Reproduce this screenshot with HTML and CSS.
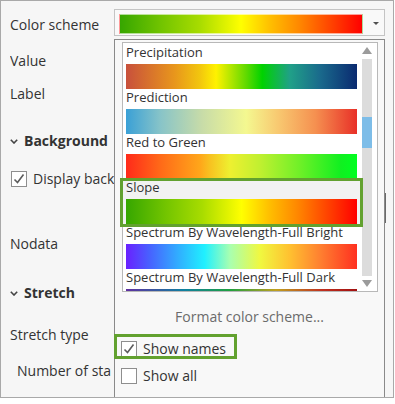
FILE: index.html
```html
<!DOCTYPE html>
<html lang="en">
<head>
<meta charset="utf-8">
<title>Color scheme</title>
<link rel="stylesheet" href="styles.css">
</head>
<body>
<div class="frame">
  <div class="panel">
    <div class="row row-scheme">
      <span class="label">Color scheme</span>
      <div class="combo">
        <div class="combo-ramp ramp-slope"></div>
        <span class="combo-arrow"></span>
        <div class="popup">
          <div class="list">
            <div class="items">
              <div class="item">
                <div class="item-name">Precipitation</div>
                <div class="item-ramp ramp-precip"></div>
              </div>
              <div class="item">
                <div class="item-name">Prediction</div>
                <div class="item-ramp ramp-predict"></div>
              </div>
              <div class="item">
                <div class="item-name">Red to Green</div>
                <div class="item-ramp ramp-redgreen"></div>
              </div>
              <div class="item item-selected">
                <div class="item-name">Slope</div>
                <div class="item-ramp ramp-slope"></div>
              </div>
              <div class="item">
                <div class="item-name">Spectrum By Wavelength-Full Bright</div>
                <div class="item-ramp ramp-bright"></div>
              </div>
              <div class="item">
                <div class="item-name">Spectrum By Wavelength-Full Dark</div>
                <div class="item-ramp ramp-dark"></div>
              </div>
            </div>
            <div class="scrollbar">
              <span class="sb-up"></span>
              <div class="sb-track"><div class="sb-thumb"></div></div>
              <span class="sb-down"></span>
            </div>
          </div>
          <div class="format">Format color scheme...</div>
          <div class="check-row first">
            <span class="checkbox"><svg width="14" height="14" viewBox="0 0 14 14"><path d="M2.5 7.5 L5.5 10.5 L11.5 2.5" fill="none" stroke="#5c5c5c" stroke-width="1.6"/></svg></span>
            <span>Show names</span>
          </div>
          <div class="check-row second">
            <span class="checkbox"></span>
            <span>Show all</span>
          </div>
        </div>
      </div>
    </div>
    <div class="row clip row-value">Value</div>
    <div class="row clip row-label">Label</div>
    <div class="row clip row-bg section"><svg class="chev" width="8" height="5" viewBox="0 0 8 5"><path d="M0.8 0.8 L4 4 L7.2 0.8" fill="none" stroke="#444" stroke-width="1.6"/></svg><span>Background</span></div>
    <div class="row clip row-display">
      <span class="checkbox"><svg width="14" height="14" viewBox="0 0 14 14"><path d="M2.5 7.5 L5.5 10.5 L11.5 2.5" fill="none" stroke="#5c5c5c" stroke-width="1.6"/></svg></span>
      <span>Display back</span>
    </div>
    <div class="row clip row-nodata">Nodata</div>
    <div class="row clip row-stretch section"><svg class="chev" width="8" height="5" viewBox="0 0 8 5"><path d="M0.8 0.8 L4 4 L7.2 0.8" fill="none" stroke="#444" stroke-width="1.6"/></svg><span>Stretch</span></div>
    <div class="row clip row-type">Stretch type</div>
    <div class="row clip row-num">Number of sta</div>
  </div>
  <div class="highlight hl-slope"></div>
  <div class="highlight hl-names"></div>
  <div class="mark"></div>
</div>
</body>
</html>
```

FILE: styles.css
```css
html, body {
  margin: 0;
  padding: 0;
  background: #ffffff;
}

.frame {
  position: relative;
  width: 394px;
  height: 398px;
  box-sizing: border-box;
  border: 1px solid #a9a9a9;
  background: #f6f6f6;
  overflow: hidden;
  font-family: "Open Sans", "Liberation Sans", sans-serif;
  font-size: 14px;
  line-height: 20px;
  color: #333333;
}

.panel {
  display: flex;
  flex-direction: column;
  padding: 8px 0 0 9px;
}

.row {
  display: flex;
  align-items: center;
  height: 20px;
  white-space: nowrap;
}

.clip {
  width: 104px;
  box-sizing: border-box;
  overflow: hidden;
}

.row-scheme {
  align-items: flex-start;
  height: 27px;
}

.row-scheme .label {
  flex: 0 0 104px;
  padding-top: 6px;
}

.row-value { margin-top: 15px; }
.row-label { margin-top: 13px; }
.row-bg { margin-top: 27px; }
.row-display { margin-top: 18px; }
.row-nodata { margin-top: 45px; }
.row-stretch { margin-top: 29px; }
.row-type { margin-top: 22px; }
.row-num { margin-top: 16px; padding-left: 7px; }

.section {
  font-weight: 700;
}

.chev {
  margin-right: 6px;
  flex: 0 0 auto;
}

.row-display .checkbox {
  margin-left: 1px;
  margin-right: 6px;
}

.checkbox {
  width: 16px;
  height: 16px;
  box-sizing: border-box;
  border: 1px solid #8e8e8e;
  background: #ffffff;
  display: inline-flex;
  align-items: center;
  justify-content: center;
  flex: 0 0 auto;
}

/* combo */
.combo {
  position: relative;
  z-index: 2;
  width: 271px;
  height: 27px;
  box-sizing: border-box;
  border: 1px solid #c4c4c4;
  background: #f9f9f9;
  display: flex;
  align-items: flex-start;
  padding: 4px 0 0 4px;
}

.combo-ramp {
  width: 244px;
  height: 20px;
  box-sizing: border-box;
  border: 1px solid rgba(255, 255, 255, 0.6);
}

.combo-arrow {
  width: 0;
  height: 0;
  border-left: 3px solid transparent;
  border-right: 3px solid transparent;
  border-top: 3px solid #505050;
  margin: 8px 0 0 10px;
}

.popup {
  position: absolute;
  top: 29px;
  left: -1px;
  width: 271px;
  height: 359px;
  box-sizing: border-box;
  border: 1px solid #8a8a8a;
  background: #f8f8f8;
  padding-top: 2px;
  display: flex;
  flex-direction: column;
}

.list {
  margin-left: 7px;
  width: 256px;
  height: 250px;
  box-sizing: border-box;
  border: 1px solid #b8b8b8;
  background: #ffffff;
  display: flex;
  overflow: hidden;
}

.items {
  width: 239px;
  flex: 0 0 239px;
  padding-top: 1px;
  overflow: hidden;
}

.item {
  height: 45px;
  padding: 0 5px 0 3px;
}

.item-selected {
  background: #f2f2f2;
}

.item-name {
  height: 16px;
  font-size: 13px;
  line-height: 16px;
  color: #333333;
  white-space: nowrap;
}

.item-ramp {
  margin-top: 4px;
  height: 25px;
}

.scrollbar {
  width: 10px;
  flex: 0 0 10px;
  display: flex;
  flex-direction: column;
  align-items: center;
  padding-top: 4px;
}

.sb-up {
  width: 0;
  height: 0;
  border-left: 5px solid transparent;
  border-right: 5px solid transparent;
  border-bottom: 7px solid #9b9b9b;
}

.sb-down {
  width: 0;
  height: 0;
  border-left: 5px solid transparent;
  border-right: 5px solid transparent;
  border-top: 7px solid #9b9b9b;
  margin-top: 4px;
}

.sb-track {
  width: 10px;
  height: 217px;
  margin-top: 5px;
  background: #dcdcdc;
  display: flex;
  flex-direction: column;
}

.sb-thumb {
  margin-top: 58px;
  height: 31px;
  background: #7dbde8;
}

.format {
  margin-top: 15px;
  text-align: center;
  color: #6b6b6b;
}

.check-row {
  display: flex;
  align-items: center;
  gap: 6px;
  padding-left: 6px;
  height: 20px;
}

.check-row.first { margin-top: 12px; }
.check-row.second { margin-top: 7px; }

/* ramps */
.ramp-slope {
  background: linear-gradient(to right, #36a600 0%, #72c400 17%, #a8dc00 33%, #ffff00 50%, #ffbf00 62%, #ff8800 74%, #ff4400 87%, #ff0000 100%);
}

.ramp-precip {
  background: linear-gradient(to right, #c8503c 0%, #e8961c 21%, #f2c60e 32%, #fff200 39%, #60da00 52%, #00d200 59%, #20a088 71%, #1a6a8c 84%, #0a2a70 100%);
}

.ramp-predict {
  background: linear-gradient(to right, #3aa0d6 0%, #88c4c8 15%, #c8dca8 33%, #f4f890 52%, #f8c870 66%, #f59050 82%, #e83028 100%);
}

.ramp-redgreen {
  background: linear-gradient(to right, #ff2a1a 0%, #ff6a18 15%, #ffa61a 32%, #f8c020 36%, #eef030 45%, #c0f030 58%, #70f028 75%, #10f020 93%, #00ff20 100%);
}

.ramp-bright {
  background: linear-gradient(to right, #6a20ff 0%, #4860ff 10%, #30b0ff 23%, #20f0ff 34%, #a8ffb0 45%, #f0f840 58%, #ffc030 71%, #ff8030 84%, #ff3020 100%);
}

.ramp-dark {
  background: linear-gradient(to right, #6030a0 0%, #1080a0 25%, #20a040 45%, #c0a020 65%, #c03020 85%, #a01010 100%);
}

/* annotation overlays */
.highlight {
  position: absolute;
  box-sizing: border-box;
  border: 3px solid #62a12f;
  z-index: 5;
}

.hl-slope {
  left: 119px;
  top: 177px;
  width: 243px;
  height: 49px;
}

.hl-names {
  left: 113px;
  top: 333px;
  width: 123px;
  height: 25px;
}

.mark {
  position: absolute;
  left: 384px;
  top: 192px;
  width: 1px;
  height: 30px;
  background: #6a6a6a;
  z-index: 6;
}
```
